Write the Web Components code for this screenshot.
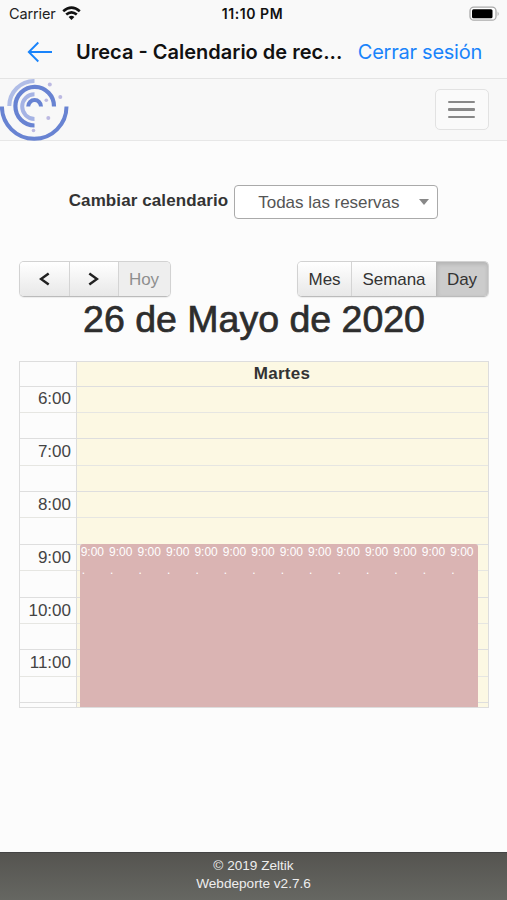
<!DOCTYPE html>
<html lang="es">
<head>
<meta charset="utf-8">
<meta name="viewport" content="width=device-width">
<title>Ureca - Calendario de reservas</title>
<style>
html,body{margin:0;height:100%;overflow:hidden;background:#fcfcfc}
</style>
</head>
<body>
<reservas-app></reservas-app>
<script>
const define = (name, html, setup) => customElements.define(name, class extends HTMLElement {
  constructor() {
    super();
    this.attachShadow({mode: 'open'}).innerHTML = '<style>*{box-sizing:border-box}:host{box-sizing:border-box}</style>' + html;
  }
  connectedCallback() { if (setup) setup(this, this.shadowRoot); }
});

define('status-bar', `
<style>
:host{display:grid;grid-template-columns:1fr auto 1fr;align-items:center;height:27px;padding:0 7px 0 9px;font:14.5px/27px Inter,sans-serif;color:#222}
.left{display:flex;align-items:center;gap:6px}
.carrier{letter-spacing:-.13px}
.time{font-weight:600;font-size:14px;letter-spacing:.55px;color:#111;margin:0 1px 0 -3px}
.battery{justify-self:end}
svg{display:block}
</style>
<div class="left"><span class="carrier">Carrier</span>
<svg width="19" height="15" viewBox="0 0 19 15" fill="none" stroke="#111" stroke-width="2.6"><path d="M1.2 5.2Q9.500-2 17.800 5.200M4.200 8.600Q9.500 4 14.800 8.600"/><path d="M6.600 10.900Q9.500 8.700 12.400 10.900L9.500 14Z" fill="#111" stroke="none"/></svg></div>
<span class="time">11:10 PM</span>
<svg class="battery" width="31" height="16" viewBox="0 0 31 16"><rect x="1" y="1.200" width="26" height="13" rx="3.800" fill="#fff" stroke="#aaa" stroke-width="1.300"/><rect x="3" y="3.200" width="20.500" height="9" rx="1.500" fill="#000"/><path d="M28.600 5.500q2.200 2.300 0 4.600z" fill="#aaa"/></svg>`);

define('title-bar', `
<style>
:host{display:flex;align-items:center;height:52px;padding:0 25px 1px 27px;border-bottom:1.500px solid #e4e4e4;font:20px/50px Inter,sans-serif;color:#111}
svg{flex:none;margin-right:23px}
.title{flex:1;font-weight:600;white-space:nowrap;letter-spacing:0}
.action{color:#1a84fb;white-space:nowrap;letter-spacing:-.25px}
</style>
<svg width="26" height="22" viewBox="0 0 26 22" fill="none" stroke="#1a84fb" stroke-width="1.900"><path d="M25 11H2M11.300 1.500L1.800 11l9.500 9.500"/></svg>
<span class="title"><slot></slot></span><span class="action">Cerrar sesión</span>`);

define('nav-bar', `
<style>
:host{display:flex;align-items:center;justify-content:space-between;height:62px;padding-right:18px;background:#f8f8f8;border-bottom:1px solid #e7e7e7}
button{display:flex;flex-direction:column;justify-content:center;align-items:center;gap:5px;width:54px;height:41px;margin-top:-1px;padding:1px 2px 0 0;border:1.500px solid #e2e2e2;border-radius:5px;background:#fafafa}
i{width:27px;height:2.400px;border-radius:1px;background:#888}
</style>
<svg width="70" height="62" viewBox="0 0 70 62" fill="none">
<path d="M1.900 27.500a32.300 32.300 0 0 0 64.600 0" stroke="#6883d2" stroke-width="4"/>
<path d="M9.300 27A25 25 0 0 1 34.500 2" stroke="#b0bde7" stroke-width="4"/>
<path d="M54 27.500A19.300 19.300 0 1 0 34.500 46.500" stroke="#6883d2" stroke-width="4.200"/>
<path d="M34.500 15.300A12.300 12.300 0 0 0 34.500 39.900" stroke="#a5b3e4" stroke-width="4"/>
<path d="M28.200 27.500a6.400 6.400 0 0 1 12.800 0" stroke="#6883d2" stroke-width="4"/>
<g fill="#bcb9e2"><circle cx="49.800" cy="5.500" r="2"/><circle cx="60.300" cy="18" r="2"/><circle cx="46.300" cy="21.200" r="1.800"/><circle cx="48.300" cy="39" r="2"/><circle cx="33.500" cy="51.500" r="1.800"/></g>
</svg>
<button aria-label="Menú"><i></i><i></i><i></i></button>`);

define('calendar-picker', `
<style>
:host{display:flex;align-items:center;justify-content:center;gap:6px;height:35px;margin-right:1px;font:17px/35px "Liberation Sans",Arial,sans-serif;color:#333}
label{font-weight:700;letter-spacing:.1px;margin-top:-2px}
.select{display:flex;align-items:center;justify-content:space-between;width:204px;height:34px;padding:2px 8px 0 23px;border:1.300px solid #aaa;border-radius:4px;background:#fff;color:#555;white-space:nowrap}
.select span:first-child{letter-spacing:-.03px}
.caret{border:5px solid transparent;border-top:6.500px solid #888;border-bottom:0;margin-top:-2px}
</style>
<label>Cambiar calendario</label><div class="select"><span><slot></slot></span><span class="caret"></span></div>`);

define('tool-button', `
<style>
:host{display:flex;align-items:center;justify-content:center;height:100%;border-left:1px solid #d4d4d4;background:linear-gradient(#fff,#e8e8e8);color:#333;white-space:nowrap}
:host(:first-child){border-left:0}
:host([disabled]){background:#eee;color:#8e8e8e}
:host([active]){background:#ccc;box-shadow:inset 0 2px 4px #0002;border-color:#b8b8b8}
</style><slot></slot>`);

define('calendar-toolbar', `
<style>
:host{display:flex;justify-content:space-between;height:36px;font:17px/36px "Liberation Sans",Arial,sans-serif;letter-spacing:-.05px}
.group{display:flex;height:36px;border:1px solid #d2d2d2;border-bottom-color:#bbb;border-radius:5px;overflow:hidden;box-shadow:0 1px 1px #0001}
.arrow{width:49px;padding-right:1px}.today{width:52px}.month{width:53px}.week{width:85px}.day{width:52px}
.today,.day{padding-right:1px}
.today,.month,.week,.day{padding-top:1px}
</style>
<div class="group">
<tool-button class="arrow"><svg width="11" height="14" viewBox="0 0 11 14" fill="none" stroke="#222" stroke-width="2.500"><path d="M9.700 1.500L2 7l7.700 5.500"/></svg></tool-button>
<tool-button class="arrow"><svg width="11" height="14" viewBox="0 0 11 14" fill="none" stroke="#222" stroke-width="2.500"><path d="M1.300 1.500L9 7l-7.700 5.500"/></svg></tool-button>
<tool-button class="today" disabled>Hoy</tool-button></div>
<div class="group"><tool-button class="month">Mes</tool-button><tool-button class="week">Semana</tool-button><tool-button class="day" active>Day</tool-button></div>`);

define('day-grid', `
<style>
:host{display:grid;grid-template-columns:57px 1fr;grid-template-rows:100%;height:347px;border:1px solid #ddd;overflow:hidden;font:17px/24px "Liberation Sans",Arial,sans-serif;color:#444}
.axis{border-right:1.500px solid #ddd}
.day{display:grid;grid-template-rows:345px;background:#fcf8e3}
.rows,.events{grid-area:1/1}
.head{height:24.500px;text-align:center;font-weight:700;letter-spacing:.25px;color:#333;padding-right:1px}
.row{height:26.400px;border-top:1px solid #e6e6e2;text-align:right;padding-right:5px}
.row.hour{border-top:1.500px solid #dedede;box-shadow:0 1px 0 #dddddd70}
.row.hour:not(.first){line-height:25px}
.row.first{height:25.800px}
.events{display:grid;grid-template-columns:repeat(14,28.430px);align-self:end;width:398px;height:163px;margin-left:3px;background:#dab4b3;border-radius:3px 3px 0 0;color:#fff}
</style>
<div class="axis rows"></div><div class="day"><div class="rows lines"></div><div class="events"></div></div>`,
(host, root) => {
  const hours = ['6:00', '7:00', '8:00', '9:00', '10:00', '11:00', ''];
  const rows = labels => hours.map((h, i) =>
    `<div class="row hour${i ? '' : ' first'}">${labels ? h : ''}</div><div class="row"></div>`).join('');
  root.querySelector('.axis').innerHTML = '<div class="head"></div>' + rows(true);
  root.querySelector('.lines').innerHTML = `<div class="head">${host.getAttribute('day')}</div>` + rows(false);
  root.querySelector('.events').innerHTML = '<calendar-event>9:00</calendar-event>'.repeat(14);
});

define('calendar-event', `
<style>
:host{display:block;padding-left:.700px;font:12px/17px "Liberation Sans",Arial,sans-serif;color:#fff}
.name{padding-left:1px;height:20px;line-height:18px}
</style>
<div><slot></slot></div><div class="name">.</div>`);

define('page-footer', `
<style>
:host{display:block;height:48px;padding-top:4px;border-top:1px solid #444;background:linear-gradient(#555450,#666762);color:#eee;text-align:center;font:13.600px/18px "Liberation Sans",Arial,sans-serif}
div:first-child{margin-right:3px}
</style><div>© 2019 Zeltik</div><div>Webdeporte v2.7.6</div>`);

define('reservas-app', `
<style>
:host{display:flex;flex-direction:column;height:900px;background:#fcfcfc}
header{background:#f9f9f9}
main{flex:1;padding:43px 18px 0 19px}
calendar-toolbar{margin-top:42px}
h2{margin:0;height:63.500px;text-align:center;font:37.500px/44px "Liberation Sans",Arial,sans-serif;color:#2d2d2d;-webkit-text-stroke:.700px #2d2d2d;white-space:nowrap}
</style>
<header><status-bar></status-bar><title-bar>Ureca - Calendario de rec...</title-bar></header>
<nav-bar></nav-bar>
<main><calendar-picker>Todas las reservas</calendar-picker>
<calendar-toolbar></calendar-toolbar>
<h2>26 de Mayo de 2020</h2>
<day-grid day="Martes"></day-grid></main>
<page-footer></page-footer>`);
</script>
</body>
</html>
